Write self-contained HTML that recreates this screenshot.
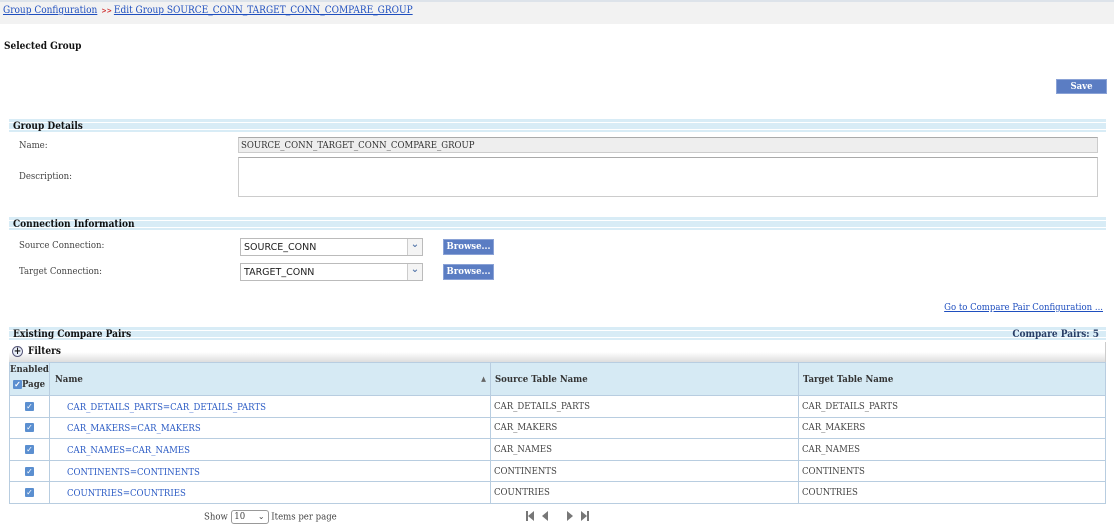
<!DOCTYPE html>
<html><head><meta charset="utf-8"><style>
body{margin:0;width:1114px;height:525px;position:relative;background:#fff;font-family:"DejaVu Serif","Liberation Serif",serif;font-stretch:condensed;font-size:10px;color:#333;overflow:hidden}
.a{position:absolute;white-space:nowrap}
a{color:#1f4fbf;text-decoration:underline}
.hdr{position:absolute;left:9px;width:1097px;height:14px;background:linear-gradient(#d8ecf6 0,#d8ecf6 3px,#fff 3px,#fff 4px,#d8ecf6 4px,#d8ecf6 10px,#fff 10px,#fff 11px,#d8ecf6 11px,#d8ecf6 13px,#fff 13px);font-weight:bold;color:#111;}
.hdr span{position:absolute;left:4px;top:2px}
.lbl{position:absolute;left:19px;color:#444;font-size:9.5px}
.btn{position:absolute;background:#5b7dc3;color:#fff;font-weight:bold;font-size:9.5px;text-align:center;border:1px solid #8aa2d6;box-sizing:border-box}
.sel{position:absolute;left:240px;width:183px;height:18px;border:1px solid #bbb;box-sizing:border-box;font-family:"DejaVu Sans","Liberation Sans",sans-serif;font-stretch:normal;font-size:9.5px;color:#222}
.sel span{position:absolute;left:3px;top:3px}
.sel i{position:absolute;right:0;top:0;width:14px;height:16px;border-left:1px solid #ccc;background:#f4f4f4;font-style:normal;color:#5577aa;font-size:10px;font-weight:bold;text-align:center;line-height:12px}
table{position:absolute;left:9px;top:362px;width:1097px;border-collapse:collapse;table-layout:fixed}
td,th{border:1px solid #b8cde0;padding:0;font-size:9.5px;overflow:hidden;white-space:nowrap}
th{background:#d6eaf4;text-align:left;color:#333}
td{height:20.6px;color:#444}
td.n a{color:#2c5cc5;text-decoration:none;padding-left:17px;position:relative;top:1px}
.cb{display:inline-block;width:9px;height:9px;background:#5b8fd0;border-radius:1px;color:#fff;font-size:8px;line-height:9px;text-align:center}
</style></head><body>
<div class="a" style="left:0;top:0;width:1114px;height:24px;background:#f2f2f2;border-top:2px solid #dde3ea;box-sizing:border-box"></div>
<div class="a" style="left:3px;top:5px"><a>Group Configuration</a><span style="color:#d03030;font-size:7px;font-weight:bold;margin:0 2px 0 4px">&gt;&gt;</span><a>Edit Group SOURCE_CONN_TARGET_CONN_COMPARE_GROUP</a></div>
<div class="a" style="left:4px;top:41px;font-weight:bold;color:#111">Selected Group</div>
<div class="btn" style="left:1056px;top:79px;width:51px;height:15px;line-height:13px">Save</div>
<div class="hdr" style="top:119px"><span>Group Details</span></div>
<div class="lbl" style="top:140px">Name:</div>
<div class="a" style="left:238px;top:137px;width:860px;height:16px;background:#eee;border:1px solid #ccc;border-top-color:#aaa;box-sizing:border-box;padding:2px 2px;font-size:9.5px;color:#333">SOURCE_CONN_TARGET_CONN_COMPARE_GROUP</div>
<div class="lbl" style="top:171px">Description:</div>
<div class="a" style="left:238px;top:157px;width:860px;height:40px;border:1px solid #ccc;border-top-color:#aaa;box-sizing:border-box"></div>
<div class="hdr" style="top:217px"><span>Connection Information</span></div>
<div class="lbl" style="top:240px">Source Connection:</div>
<div class="sel" style="top:238px"><span>SOURCE_CONN</span><i>&#8964;</i></div>
<div class="btn" style="left:443px;top:239px;width:51px;height:16px;line-height:14px">Browse...</div>
<div class="lbl" style="top:266px">Target Connection:</div>
<div class="sel" style="top:263px"><span>TARGET_CONN</span><i>&#8964;</i></div>
<div class="btn" style="left:443px;top:264px;width:51px;height:16px;line-height:14px">Browse...</div>
<div class="a" style="right:11px;top:302px;font-size:9.5px"><a>Go to Compare Pair Configuration ...</a></div>
<div class="hdr" style="top:327px"><span>Existing Compare Pairs</span><span style="left:auto;right:7px;color:#2a3e66">Compare Pairs: 5</span></div>
<div class="a" style="left:9px;top:342px;width:1097px;height:20px;background:linear-gradient(#fff,#fff 50%,#ddd);border-right:1px solid #ccc;box-sizing:border-box;font-weight:bold;color:#111"><span style="position:absolute;left:3px;top:4px;width:11px;height:11px;border:1px solid #557;background:#e8eef8;border-radius:50%;font-size:10px;line-height:9px;text-align:center;box-sizing:border-box">+</span><span style="position:absolute;left:19px;top:4px">Filters</span></div>
<table>
<colgroup><col style="width:40px"><col style="width:441px"><col style="width:308px"><col></colgroup>
<tr style="height:33px"><th style="vertical-align:top;padding-top:1px"><b>Enabled</b><br><span style="display:block;margin-top:4px"><span class="cb" style="margin-left:3px">✓</span>Page</span></th>
<th style="padding-left:5px">Name<span style="float:right;margin-right:4px;font-size:7px;color:#666">▲</span></th>
<th style="padding-left:4px">Source Table Name</th><th style="padding-left:4px">Target Table Name</th></tr>
<tr><td style="text-align:center"><span class="cb">✓</span></td><td class="n"><a>CAR_DETAILS_PARTS=CAR_DETAILS_PARTS</a></td><td style="padding-left:3px">CAR_DETAILS_PARTS</td><td style="padding-left:3px">CAR_DETAILS_PARTS</td></tr>
<tr><td style="text-align:center"><span class="cb">✓</span></td><td class="n"><a>CAR_MAKERS=CAR_MAKERS</a></td><td style="padding-left:3px">CAR_MAKERS</td><td style="padding-left:3px">CAR_MAKERS</td></tr>
<tr><td style="text-align:center"><span class="cb">✓</span></td><td class="n"><a>CAR_NAMES=CAR_NAMES</a></td><td style="padding-left:3px">CAR_NAMES</td><td style="padding-left:3px">CAR_NAMES</td></tr>
<tr><td style="text-align:center"><span class="cb">✓</span></td><td class="n"><a>CONTINENTS=CONTINENTS</a></td><td style="padding-left:3px">CONTINENTS</td><td style="padding-left:3px">CONTINENTS</td></tr>
<tr><td style="text-align:center"><span class="cb">✓</span></td><td class="n"><a>COUNTRIES=COUNTRIES</a></td><td style="padding-left:3px">COUNTRIES</td><td style="padding-left:3px">COUNTRIES</td></tr>
</table>
<div class="a" style="left:204px;top:510px;font-size:9.5px;color:#444">Show <span style="display:inline-block;width:36px;height:12px;border:1px solid #999;border-radius:3px;vertical-align:middle;position:relative;line-height:11px">&nbsp;10<span style="position:absolute;right:3px;top:0;font-size:8px">&#8964;</span></span> Items per page</div>
<svg class="a" style="left:525px;top:510px" width="68" height="12" viewBox="0 0 68 12" fill="#777">
<rect x="1" y="1" width="2" height="10"/><path d="M9 1 L3 6 L9 11Z"/>
<path d="M23 1 L17 6 L23 11Z"/>
<path d="M42 1 L48 6 L42 11Z"/>
<path d="M56 1 L62 6 L56 11Z"/><rect x="62" y="1" width="2" height="10"/>
</svg>
</body></html>
